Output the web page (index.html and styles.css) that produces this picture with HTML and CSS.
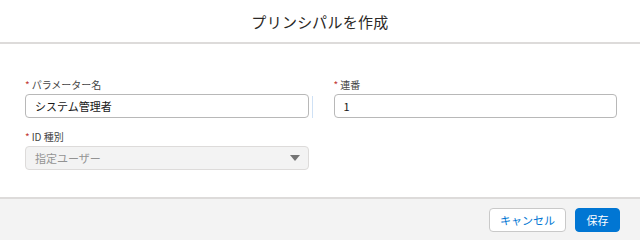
FILE: index.html
```html
<!DOCTYPE html>
<html lang="ja">
<head>
<meta charset="utf-8">
<link rel="stylesheet" href="styles.css">
</head>
<body>
<div class="modal">
  <header class="modal-header">
    <h2 class="title">プリンシパルを作成</h2>
  </header>
  <main class="modal-body">
    <div class="grid">
      <div class="field">
        <label class="label"><abbr class="req">*</abbr>パラメーター名</label>
        <div class="control focus-mark">
          <input class="input" type="text" value="システム管理者">
        </div>
      </div>
      <div class="field">
        <label class="label"><abbr class="req">*</abbr>連番</label>
        <div class="control">
          <input class="input" type="text" value="1">
        </div>
      </div>
      <div class="field">
        <label class="label"><abbr class="req">*</abbr>ID 種別</label>
        <div class="control">
          <div class="select">
            <span class="select-text">指定ユーザー</span>
            <svg class="caret" width="10" height="6" viewBox="0 0 10 6"><path d="M0 0h10L5 6z" fill="#747474"/></svg>
          </div>
        </div>
      </div>
    </div>
  </main>
  <footer class="modal-footer">
    <button class="btn btn-neutral">キャンセル</button>
    <button class="btn btn-brand">保存</button>
  </footer>
</div>
</body>
</html>
```
FILE: styles.css
```css
* { box-sizing: border-box; }
html, body { margin: 0; padding: 0; }
body {
  width: 640px;
  height: 240px;
  overflow: hidden;
  background: #fff;
  font-family: "Noto Sans CJK JP", "Noto Sans", sans-serif;
  color: #181818;
}
.modal {
  display: flex;
  flex-direction: column;
  height: 240px;
}
.modal-header {
  height: 44px;
  border-bottom: 2px solid #dddbda;
  display: flex;
  align-items: center;
  justify-content: center;
}
.title {
  margin: 0;
  font-size: 15px;
  font-weight: 400;
  color: #2b2826;
  letter-spacing: 0.3px;
}
.modal-body {
  flex: 1;
  padding: 34px 23px 0 25px;
}
.grid {
  display: grid;
  grid-template-columns: 1fr 1fr;
  column-gap: 25px;
  row-gap: 12px;
}
.field {
  display: flex;
  flex-direction: column;
}
.label {
  font-size: 10px;
  line-height: 14px;
  color: #444;
  margin-bottom: 2px;
}
.req {
  color: #c23934;
  text-decoration: none;
  margin-right: 2px;
}
.control { position: relative; }
.focus-mark::after {
  content: "";
  position: absolute;
  right: -4px;
  top: 2px;
  bottom: 0;
  width: 1px;
  background: #cfe1f5;
}
.input {
  display: block;
  width: 100%;
  height: 24px;
  border: 1px solid #b8b8b8;
  border-radius: 4px;
  padding: 0 9px;
  font-family: inherit;
  font-size: 11px;
  color: #181818;
  background: #fff;
  outline: none;
}
.select {
  height: 24px;
  border: 1px solid #dddbda;
  border-radius: 4px;
  background: #f3f3f3;
  display: flex;
  align-items: center;
  justify-content: space-between;
  padding: 0 8px 0 9px;
}
.select-text {
  font-size: 11px;
  color: #939393;
}
.caret { display: block; }
.modal-footer {
  height: 43px;
  border-top: 2px solid #dddbda;
  background: #f3f3f3;
  display: flex;
  align-items: center;
  justify-content: flex-end;
  gap: 9px;
  padding: 0 20px;
}
.btn {
  height: 24px;
  border-radius: 4px;
  font-family: inherit;
  font-size: 11px;
  padding: 0;
  white-space: nowrap;
  cursor: pointer;
}
.btn-neutral {
  width: 77px;
  background: #fff;
  border: 1px solid #c9c9c9;
  color: #0176d3;
}
.btn-brand {
  width: 45px;
  background: #0176d3;
  border: 1px solid #0176d3;
  color: #fff;
}
```
